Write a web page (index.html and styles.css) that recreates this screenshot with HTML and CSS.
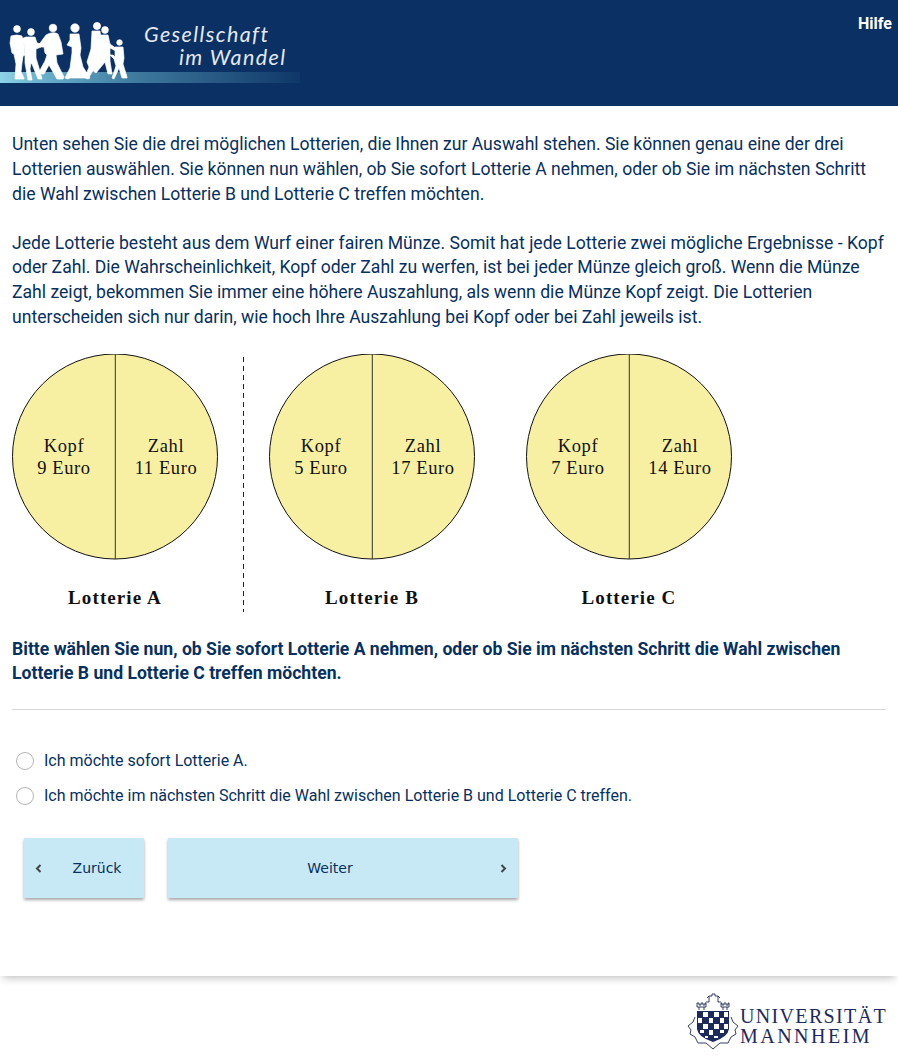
FILE: index.html
```html
<!DOCTYPE html>
<html lang="de">
<head>
<meta charset="utf-8">
<title>Gesellschaft im Wandel</title>
<link rel="stylesheet" href="styles.css">
</head>
<body>
<div class="page">
  <header class="top">
    <div class="brand">
      <svg class="people" width="130" height="84" viewBox="0 0 130 84" aria-hidden="true">
        <g fill="#fff" stroke="#fff" stroke-width=".7" stroke-linejoin="round">
          <circle cx="17" cy="29" r="3.4"/><path d="M11 36q6-2 11 0l2 9 1 10-2 1-1 7-1 9 3 6v1h-9l1-15-2-10-2-1-2-10z"/>
          <circle cx="31" cy="32" r="3.4"/><path d="M26 37h9l2 6 5 1-1 3-5 2 0 9 3 10 3 11h-4l-6-15-1-1-1 6 2 11h-4l-3-17 0-12-1-7-3-5z"/>
          <circle cx="53" cy="28" r="3.800"/><path d="M46 35q7-4 12-1l3 8 2 12-7 1 1 8 7 14-1 2h-6l-8-14-5 9h-4l-1-2 6-11 2-6-2-2-1-6-4 0-2-1z"/>
          <circle cx="75" cy="28" r="4.200"/><path d="M70 34h9l2 14-1 7 3 12 7 11-2 1-3-1-15 0-2 1-3-1 5-10 2-15 0-6-5-2 3-5z"/>
          <circle cx="97" cy="26" r="3.600"/><path d="M92 31h8l2 16 1 14-7 5-7 11-3-2 3-8-2-5 4-13z"/>
          <circle cx="105" cy="30" r="3.400"/><path d="M100 35h8l2 9 7 5-1 2-6-3 0 13 2 13h-4l-3-12-9 11-3-2 7-13-1-9z"/>
          <circle cx="119.500" cy="42.500" r="2.800"/><path d="M115 47h8l1 11-1 6 4 13v1h-5l-3-10-5 11-2-1 4-12-2-7-4-4 3 0 2 2z"/>
        </g>
      </svg>
      <div class="brand-title"><span>Gesellschaft</span><span class="brand-second">im Wandel</span></div>
    </div>
    <a class="help">Hilfe</a>
  </header>

  <main class="content">
    <p class="para">Unten sehen Sie die drei möglichen Lotterien, die Ihnen zur Auswahl stehen. Sie können genau eine der drei Lotterien auswählen. Sie können nun wählen, ob Sie sofort Lotterie A nehmen, oder ob Sie im nächsten Schritt die Wahl zwischen Lotterie B und Lotterie C treffen möchten.</p>
    <p class="para">Jede Lotterie besteht aus dem Wurf einer fairen Münze. Somit hat jede Lotterie zwei mögliche Ergebnisse - Kopf oder Zahl. Die Wahrscheinlichkeit, Kopf oder Zahl zu werfen, ist bei jeder Münze gleich groß. Wenn die Münze Zahl zeigt, bekommen Sie immer eine höhere Auszahlung, als wenn die Münze Kopf zeigt. Die Lotterien unterscheiden sich nur darin, wie hoch Ihre Auszahlung bei Kopf oder bei Zahl jeweils ist.</p>

    <svg class="lotteries" width="730" height="262" viewBox="0 0 730 262" role="img" aria-label="Lotterien A, B und C">
      <g class="coin">
        <circle cx="103" cy="102.500" r="102.500"/><path d="M103.300 0V205"/>
        <text x="52" y="98">Kopf</text><text x="52" y="120">9 Euro</text>
        <text x="154" y="98">Zahl</text><text x="154" y="120">11 Euro</text>
      </g>
      <text class="caption" x="103" y="250">Lotterie A</text>
      <path class="divider" d="M231.500 3V258"/>
      <g class="coin">
        <circle cx="360" cy="102.500" r="102.500"/><path d="M360.300 0V205"/>
        <text x="309" y="98">Kopf</text><text x="309" y="120">5 Euro</text>
        <text x="411" y="98">Zahl</text><text x="411" y="120">17 Euro</text>
      </g>
      <text class="caption" x="360" y="250">Lotterie B</text>
      <g class="coin">
        <circle cx="617" cy="102.500" r="102.500"/><path d="M617.300 0V205"/>
        <text x="566" y="98">Kopf</text><text x="566" y="120">7 Euro</text>
        <text x="668" y="98">Zahl</text><text x="668" y="120">14 Euro</text>
      </g>
      <text class="caption" x="617" y="250">Lotterie C</text>
    </svg>

    <p class="question">Bitte wählen Sie nun, ob Sie sofort Lotterie A nehmen, oder ob Sie im nächsten Schritt die Wahl zwischen Lotterie B und Lotterie C treffen möchten.</p>
    <hr class="rule">

    <div class="options">
      <label class="option"><span class="radio"></span>Ich möchte sofort Lotterie A.</label>
      <label class="option"><span class="radio"></span>Ich möchte im nächsten Schritt die Wahl zwischen Lotterie B und Lotterie C treffen.</label>
    </div>

    <div class="nav">
      <button class="btn btn-back" type="button">
        <svg class="chev" width="7" height="9" viewBox="0 0 7 9"><path d="M5.500 1 2 4.500 5.500 8"/></svg>
        <span class="btn-label">Zurück</span>
      </button>
      <button class="btn btn-next" type="button">
        <span class="btn-label">Weiter</span>
        <svg class="chev" width="7" height="9" viewBox="0 0 7 9"><path d="M1.500 1 5 4.500 1.500 8"/></svg>
      </button>
    </div>
  </main>

  <footer class="foot">
    <div class="uni">
      <svg class="crest" width="52" height="58" viewBox="0 0 52 58" aria-hidden="true">
        <g fill="none" stroke="#1d2b5c" stroke-width=".9">
          <path d="M10 14V10H12V12H14V10H16V12H18V10H19V14M10 14H19M12 14V17M17 14V17"/>
          <path d="M34 14V10H35V12H37V10H39V12H41V10H42V14M34 14H42M36 14V17M40 14V17"/>
          <path d="M19 9H22V3H25V1H28V3H31V9H34M22 3 20 5M31 3 33 5"/>
          <path d="M8 24 6 29 1 33 4 37 3 41 8 44 11 50 19 50 26 56 33 50 41 50 44 44 49 41 48 37 51 33 46 29 44 24"/>
        </g>
        <path d="M10 18H42V36Q41 44 26 49 11 44 10 36Z" fill="#1d2b5c"/>
        <g fill="#fff">
          <rect x="16" y="19" width="5" height="5"/><rect x="27" y="19" width="5" height="5"/><rect x="37" y="19" width="4" height="5"/>
          <rect x="11" y="25" width="4" height="5"/><rect x="22" y="25" width="4" height="5"/><rect x="33" y="25" width="4" height="5"/>
          <rect x="16" y="31" width="5" height="5"/><rect x="27" y="31" width="5" height="5"/><rect x="37" y="31" width="4" height="5"/>
          <rect x="22" y="37" width="4" height="5"/><rect x="33" y="37" width="4" height="3"/><rect x="13" y="37" width="4" height="3"/>
          <rect x="27" y="43" width="4" height="2"/><rect x="18" y="43" width="3" height="2"/>
        </g>
      </svg>
      <div class="uni-name"><span>UNIVERSITÄT</span><span class="uni-second">MANNHEIM</span></div>
    </div>
  </footer>
</div>
</body>
</html>
```
FILE: styles.css
```css
* { box-sizing: border-box; }
html, body { margin: 0; padding: 0; background: #fff; }
body { font-family: Roboto, "Liberation Sans", sans-serif; color: #06305f; }
.page { width: 898px; height: 1062px; overflow: hidden; }

.top {
  height: 106px;
  background: #0a3064;
  display: flex;
  justify-content: space-between;
  align-items: flex-start;
}
.brand {
  width: 300px;
  height: 83px;
  display: flex;
  background: linear-gradient(90deg, #8fd3e8 0, #6cb4cf 12%, #3f7a9f 45%, #0f3768 100%) no-repeat 0 72px / 300px 11px;
}
.people { flex: none; filter: blur(.3px); }
.brand-title {
  margin: 23px 0 0 14px;
  display: flex;
  flex-direction: column;
  font-family: Lato, sans-serif;
  font-style: italic;
  font-size: 21.5px;
  line-height: 23px;
  letter-spacing: 1.4px;
  color: #e4e9f0;
  white-space: nowrap;
}
.brand-second { margin-left: 35px; }
.help {
  margin: 14px 6px 0 0;
  font-size: 16px;
  line-height: 20px;
  font-weight: 700;
  color: #fff;
}

.content { height: 870px; padding: 0 12px; box-shadow: 0 5px 8px -3px rgba(0,0,0,.25); }
.para { margin: 0 0 24.64px; font-size: 17.6px; line-height: 24.64px; }
.para:first-child { padding-top: 26.3px; }
.lotteries { display: block; margin: 0 0 20.700px; }
.coin circle { fill: #f7f0a2; stroke: #111; stroke-width: 1; }
.coin path { stroke: #333; stroke-width: 1; fill: none; }
.coin text, .caption {
  font-family: "Liberation Serif", serif;
  text-anchor: middle;
  fill: #111;
}
.coin text { font-size: 18.5px; letter-spacing: .6px; }
.caption { font-size: 19px; font-weight: 700; letter-spacing: 1.1px; }
.divider { stroke: #222; stroke-width: 1; stroke-dasharray: 5 4; fill: none; }

.question { margin: 0; font-size: 17.6px; line-height: 24.64px; font-weight: 700; }
.rule { margin: 23px 0 0; border: 0; border-top: 1px solid #d9d9d9; }
.options { padding: 39px 4px 0; display: flex; flex-direction: column; gap: 11px; }
.option { display: flex; align-items: center; gap: 10px; font-size: 16px; line-height: 24px; }
.radio { width: 18px; height: 18px; border-radius: 50%; border: 1px solid #b5b5b5; background: #fff; flex: none; }

.nav { display: flex; gap: 24px; padding: 30px 12px 0; }
.btn {
  height: 60px;
  padding: 0 11px;
  border: 0;
  border-radius: 0;
  background: #c6e9f5;
  color: #06305f;
  font-family: "DejaVu Sans", sans-serif;
  font-size: 14px;
  display: flex;
  align-items: center;
  box-shadow: 0 2px 3px rgba(0,0,0,.35);
}
.btn-back { width: 120px; }
.btn-next { width: 350px; }
.btn-label { flex: 1; text-align: center; }
.btn-back .btn-label { padding-left: 19px; }
.btn-next .btn-label { padding-right: 19px; }
.chev { fill: none; stroke: #444; stroke-width: 2; flex: none; }

.foot { display: flex; justify-content: flex-end; padding: 17px 11px 0 0; }
.uni { display: flex; align-items: flex-start; }
.crest { display: block; margin-right: 1px; }
.uni-name {
  display: flex;
  flex-direction: column;
  margin-top: 13px;
  font-family: "Liberation Serif", serif;
  font-size: 20px;
  line-height: 20px;
  letter-spacing: 1.35px;
  color: #1d2b5c;
}
.uni-second { letter-spacing: 2.5px; }
```
